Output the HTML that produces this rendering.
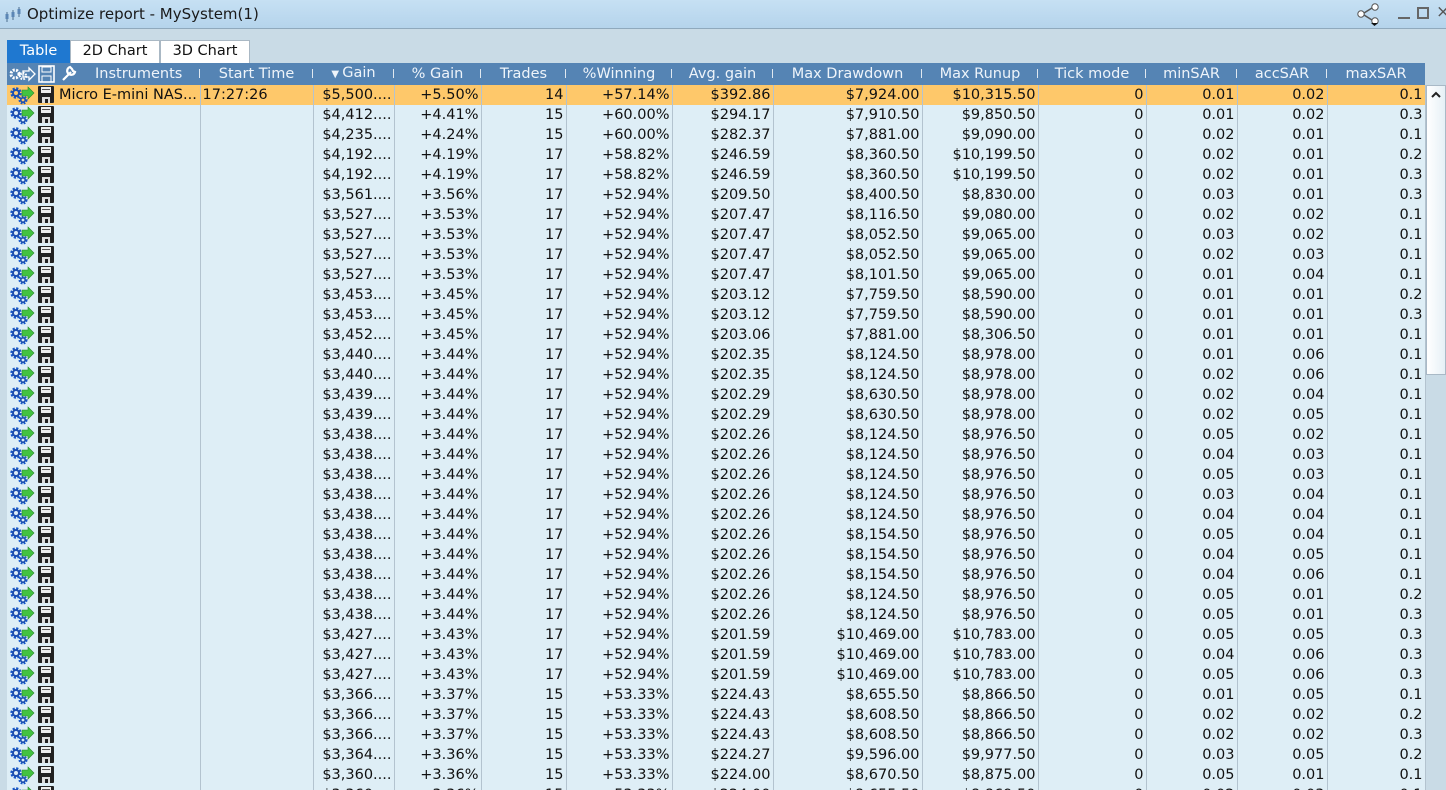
<!DOCTYPE html>
<html><head><meta charset="utf-8">
<style>
*{margin:0;padding:0;box-sizing:border-box}
html,body{width:1446px;height:790px;overflow:hidden}
body{background:#c9dbe6;font-family:"DejaVu Sans","Liberation Sans",sans-serif;font-size:14.5px;color:#111;position:relative}
#title{position:absolute;left:0;top:0;width:1446px;height:29px;background:linear-gradient(#c6e0f3,#b5d4ec);border-bottom:1px solid #8fa9bd}
#title .t{position:absolute;left:27px;top:5px;font-size:15px;color:#1a1a1a}
#tabs{position:absolute;left:7px;top:40px;height:23px}
.tab{position:absolute;top:0;height:23px;border:1px solid #aab8c4;border-bottom:none;background:#fff;text-align:center;line-height:21px;font-size:14.5px}
#wrap{position:absolute;left:7px;top:63px;width:1419px;height:727px;overflow:hidden}
table{border-collapse:collapse;table-layout:fixed;width:1418px}
tr{height:20px}
td,th{height:20px;line-height:19px;padding:0 2px;white-space:nowrap;overflow:hidden;font-weight:normal}
th{background:#5584b4;color:#eef4fa;height:21px;line-height:21px;text-align:center;position:relative}
th.s:after{content:"";position:absolute;right:0;top:6px;height:9px;border-right:1px solid #e0e8f0}
td{background:#deeef6;border-right:1px solid #b3c3cf;text-align:right}
tr.h td{background:#fec86a}
td.i{padding:0;border-right:none;text-align:left}
svg{display:block}
#sb{position:absolute;left:1426px;top:84px;width:20px;height:706px;background:#c9dbe6}
#thumb{position:absolute;left:1426px;top:85px;width:20px;height:290px;background:linear-gradient(90deg,#fff,#e6f0f6);border:1px solid #a9b9c6}
</style></head><body>
<svg width="0" height="0" style="position:absolute">
<defs>
<g id="g">
<circle cx="7" cy="8" r="4.2" fill="none" stroke="#1456c8" stroke-width="3" stroke-dasharray="2 1.3"/>
<circle cx="7" cy="8" r="3" fill="none" stroke="#1e4fae" stroke-width="2"/>
<circle cx="14" cy="15" r="3.2" fill="none" stroke="#1456c8" stroke-width="2.6" stroke-dasharray="1.6 1.1"/>
<circle cx="14" cy="15" r="2.2" fill="none" stroke="#1e4fae" stroke-width="1.6"/>
<path d="M13 5h6v-3l6 6-6 6v-3h-6z" fill="#43c241" stroke="#2a8a2a" stroke-width=".6"/>
</g>
<g id="f">
<rect x="1" y="1" width="16" height="17" rx="1" fill="#222"/>
<rect x="4" y="2" width="10" height="6" fill="#eee"/>
<rect x="5" y="4" width="8" height="1" fill="#555"/>
<rect x="5" y="12" width="8" height="6" fill="#ddd"/>
<rect x="8" y="14" width="3" height="4" fill="#222"/>
</g>
</defs></svg>
<div id="title">
<svg style="position:absolute;left:4px;top:6px" width="20" height="18"><path d="M3 6v10M9 4v10M15 1v10" stroke="#4a6c8c" stroke-width="1"/><rect x="1.5" y="8" width="3" height="5" fill="#5b86b5"/><rect x="7.5" y="6" width="3" height="5" fill="#5b86b5"/><rect x="13.5" y="3" width="3" height="5" fill="#5b86b5"/></svg>
<span class="t">Optimize report - MySystem(1)</span>
<svg style="position:absolute;left:1356px;top:3px" width="30" height="24"><circle cx="19" cy="4" r="3.2" fill="#fff" stroke="#555"/><circle cx="5" cy="11" r="3.2" fill="#fff" stroke="#555"/><circle cx="19" cy="18" r="3.2" fill="#fff" stroke="#555"/><path d="M8 10l8-5M8 12l8 5" stroke="#555" stroke-width="1.5"/><path d="M15 20h7l-3.5 3z" fill="#111"/></svg>
<div style="position:absolute;left:1398px;top:17px;width:12px;height:2px;background:#666"></div>
<div style="position:absolute;left:1417px;top:7px;width:12px;height:12px;border:2px solid #666"></div>
<div style="position:absolute;left:1436px;top:2px;font-size:17px;color:#555">×</div>
</div>
<div id="tabs">
<div class="tab" style="left:0;width:63px;background:#1f78d0;color:#fff;border-color:#1f78d0">Table</div>
<div class="tab" style="left:63px;width:90px">2D Chart</div>
<div class="tab" style="left:153px;width:90px">3D Chart</div>
</div>
<div id="wrap">
<table>
<colgroup><col style="width:30px"><col style="width:20px"><col style="width:143px"><col style="width:113px"><col style="width:81px"><col style="width:87px"><col style="width:85px"><col style="width:106px"><col style="width:101px"><col style="width:149px"><col style="width:116px"><col style="width:108px"><col style="width:91px"><col style="width:90px"><col style="width:98px"></colgroup>
<tr style="height:21px"><th style="padding:0"><svg width="30" height="20"><g transform="translate(2,1)"><circle cx="6" cy="9" r="4" fill="none" stroke="#fff" stroke-width="3" stroke-dasharray="2 1.3"/><circle cx="14" cy="11" r="3" fill="none" stroke="#fff" stroke-width="2.4" stroke-dasharray="1.6 1.1"/><path d="M14 6h6v-3l6 6-6 6v-3h-6z" fill="none" stroke="#fff" stroke-width="1.3"/></g></svg></th><th style="padding:0"><svg width="20" height="20"><rect x="2" y="2" width="15" height="16" fill="none" stroke="#fff" stroke-width="1.6"/><rect x="5" y="3" width="9" height="5" fill="none" stroke="#fff"/><rect x="5" y="12" width="9" height="6" fill="none" stroke="#fff"/></svg></th><th class="s" style="text-align:left;padding-left:0"><svg width="20" height="20" style="position:absolute;left:2px;top:0"><path d="M4 17l8-8M11 4a4 4 0 1 0 5 5l-2-1-1-2z" stroke="#fff" stroke-width="2.2" fill="none"/></svg><span style="margin-left:38px">Instruments</span></th><th class="s">Start Time</th><th class="s"><span style="font-size:10px">▼ </span>Gain</th><th class="s">% Gain</th><th class="s">Trades</th><th class="s">%Winning</th><th class="s">Avg. gain</th><th class="s">Max Drawdown</th><th class="s">Max Runup</th><th class="s">Tick mode</th><th class="s">minSAR</th><th class="s">accSAR</th><th>maxSAR</th></tr>
<tr class="h"><td class="i"><svg width="30" height="20"><use href="#g" x="2" y="0"/></svg></td><td class="i"><svg width="20" height="20"><use href="#f"/></svg></td><td style="text-align:left">Micro E-mini NAS...</td><td style="text-align:left">17:27:26</td><td>$5,500....</td><td>+5.50%</td><td>14</td><td>+57.14%</td><td>$392.86</td><td>$7,924.00</td><td>$10,315.50</td><td>0</td><td>0.01</td><td>0.02</td><td>0.1</td></tr>
<tr><td class="i"><svg width="30" height="20"><use href="#g" x="2" y="0"/></svg></td><td class="i"><svg width="20" height="20"><use href="#f"/></svg></td><td></td><td></td><td>$4,412....</td><td>+4.41%</td><td>15</td><td>+60.00%</td><td>$294.17</td><td>$7,910.50</td><td>$9,850.50</td><td>0</td><td>0.01</td><td>0.02</td><td>0.3</td></tr>
<tr><td class="i"><svg width="30" height="20"><use href="#g" x="2" y="0"/></svg></td><td class="i"><svg width="20" height="20"><use href="#f"/></svg></td><td></td><td></td><td>$4,235....</td><td>+4.24%</td><td>15</td><td>+60.00%</td><td>$282.37</td><td>$7,881.00</td><td>$9,090.00</td><td>0</td><td>0.02</td><td>0.01</td><td>0.1</td></tr>
<tr><td class="i"><svg width="30" height="20"><use href="#g" x="2" y="0"/></svg></td><td class="i"><svg width="20" height="20"><use href="#f"/></svg></td><td></td><td></td><td>$4,192....</td><td>+4.19%</td><td>17</td><td>+58.82%</td><td>$246.59</td><td>$8,360.50</td><td>$10,199.50</td><td>0</td><td>0.02</td><td>0.01</td><td>0.2</td></tr>
<tr><td class="i"><svg width="30" height="20"><use href="#g" x="2" y="0"/></svg></td><td class="i"><svg width="20" height="20"><use href="#f"/></svg></td><td></td><td></td><td>$4,192....</td><td>+4.19%</td><td>17</td><td>+58.82%</td><td>$246.59</td><td>$8,360.50</td><td>$10,199.50</td><td>0</td><td>0.02</td><td>0.01</td><td>0.3</td></tr>
<tr><td class="i"><svg width="30" height="20"><use href="#g" x="2" y="0"/></svg></td><td class="i"><svg width="20" height="20"><use href="#f"/></svg></td><td></td><td></td><td>$3,561....</td><td>+3.56%</td><td>17</td><td>+52.94%</td><td>$209.50</td><td>$8,400.50</td><td>$8,830.00</td><td>0</td><td>0.03</td><td>0.01</td><td>0.3</td></tr>
<tr><td class="i"><svg width="30" height="20"><use href="#g" x="2" y="0"/></svg></td><td class="i"><svg width="20" height="20"><use href="#f"/></svg></td><td></td><td></td><td>$3,527....</td><td>+3.53%</td><td>17</td><td>+52.94%</td><td>$207.47</td><td>$8,116.50</td><td>$9,080.00</td><td>0</td><td>0.02</td><td>0.02</td><td>0.1</td></tr>
<tr><td class="i"><svg width="30" height="20"><use href="#g" x="2" y="0"/></svg></td><td class="i"><svg width="20" height="20"><use href="#f"/></svg></td><td></td><td></td><td>$3,527....</td><td>+3.53%</td><td>17</td><td>+52.94%</td><td>$207.47</td><td>$8,052.50</td><td>$9,065.00</td><td>0</td><td>0.03</td><td>0.02</td><td>0.1</td></tr>
<tr><td class="i"><svg width="30" height="20"><use href="#g" x="2" y="0"/></svg></td><td class="i"><svg width="20" height="20"><use href="#f"/></svg></td><td></td><td></td><td>$3,527....</td><td>+3.53%</td><td>17</td><td>+52.94%</td><td>$207.47</td><td>$8,052.50</td><td>$9,065.00</td><td>0</td><td>0.02</td><td>0.03</td><td>0.1</td></tr>
<tr><td class="i"><svg width="30" height="20"><use href="#g" x="2" y="0"/></svg></td><td class="i"><svg width="20" height="20"><use href="#f"/></svg></td><td></td><td></td><td>$3,527....</td><td>+3.53%</td><td>17</td><td>+52.94%</td><td>$207.47</td><td>$8,101.50</td><td>$9,065.00</td><td>0</td><td>0.01</td><td>0.04</td><td>0.1</td></tr>
<tr><td class="i"><svg width="30" height="20"><use href="#g" x="2" y="0"/></svg></td><td class="i"><svg width="20" height="20"><use href="#f"/></svg></td><td></td><td></td><td>$3,453....</td><td>+3.45%</td><td>17</td><td>+52.94%</td><td>$203.12</td><td>$7,759.50</td><td>$8,590.00</td><td>0</td><td>0.01</td><td>0.01</td><td>0.2</td></tr>
<tr><td class="i"><svg width="30" height="20"><use href="#g" x="2" y="0"/></svg></td><td class="i"><svg width="20" height="20"><use href="#f"/></svg></td><td></td><td></td><td>$3,453....</td><td>+3.45%</td><td>17</td><td>+52.94%</td><td>$203.12</td><td>$7,759.50</td><td>$8,590.00</td><td>0</td><td>0.01</td><td>0.01</td><td>0.3</td></tr>
<tr><td class="i"><svg width="30" height="20"><use href="#g" x="2" y="0"/></svg></td><td class="i"><svg width="20" height="20"><use href="#f"/></svg></td><td></td><td></td><td>$3,452....</td><td>+3.45%</td><td>17</td><td>+52.94%</td><td>$203.06</td><td>$7,881.00</td><td>$8,306.50</td><td>0</td><td>0.01</td><td>0.01</td><td>0.1</td></tr>
<tr><td class="i"><svg width="30" height="20"><use href="#g" x="2" y="0"/></svg></td><td class="i"><svg width="20" height="20"><use href="#f"/></svg></td><td></td><td></td><td>$3,440....</td><td>+3.44%</td><td>17</td><td>+52.94%</td><td>$202.35</td><td>$8,124.50</td><td>$8,978.00</td><td>0</td><td>0.01</td><td>0.06</td><td>0.1</td></tr>
<tr><td class="i"><svg width="30" height="20"><use href="#g" x="2" y="0"/></svg></td><td class="i"><svg width="20" height="20"><use href="#f"/></svg></td><td></td><td></td><td>$3,440....</td><td>+3.44%</td><td>17</td><td>+52.94%</td><td>$202.35</td><td>$8,124.50</td><td>$8,978.00</td><td>0</td><td>0.02</td><td>0.06</td><td>0.1</td></tr>
<tr><td class="i"><svg width="30" height="20"><use href="#g" x="2" y="0"/></svg></td><td class="i"><svg width="20" height="20"><use href="#f"/></svg></td><td></td><td></td><td>$3,439....</td><td>+3.44%</td><td>17</td><td>+52.94%</td><td>$202.29</td><td>$8,630.50</td><td>$8,978.00</td><td>0</td><td>0.02</td><td>0.04</td><td>0.1</td></tr>
<tr><td class="i"><svg width="30" height="20"><use href="#g" x="2" y="0"/></svg></td><td class="i"><svg width="20" height="20"><use href="#f"/></svg></td><td></td><td></td><td>$3,439....</td><td>+3.44%</td><td>17</td><td>+52.94%</td><td>$202.29</td><td>$8,630.50</td><td>$8,978.00</td><td>0</td><td>0.02</td><td>0.05</td><td>0.1</td></tr>
<tr><td class="i"><svg width="30" height="20"><use href="#g" x="2" y="0"/></svg></td><td class="i"><svg width="20" height="20"><use href="#f"/></svg></td><td></td><td></td><td>$3,438....</td><td>+3.44%</td><td>17</td><td>+52.94%</td><td>$202.26</td><td>$8,124.50</td><td>$8,976.50</td><td>0</td><td>0.05</td><td>0.02</td><td>0.1</td></tr>
<tr><td class="i"><svg width="30" height="20"><use href="#g" x="2" y="0"/></svg></td><td class="i"><svg width="20" height="20"><use href="#f"/></svg></td><td></td><td></td><td>$3,438....</td><td>+3.44%</td><td>17</td><td>+52.94%</td><td>$202.26</td><td>$8,124.50</td><td>$8,976.50</td><td>0</td><td>0.04</td><td>0.03</td><td>0.1</td></tr>
<tr><td class="i"><svg width="30" height="20"><use href="#g" x="2" y="0"/></svg></td><td class="i"><svg width="20" height="20"><use href="#f"/></svg></td><td></td><td></td><td>$3,438....</td><td>+3.44%</td><td>17</td><td>+52.94%</td><td>$202.26</td><td>$8,124.50</td><td>$8,976.50</td><td>0</td><td>0.05</td><td>0.03</td><td>0.1</td></tr>
<tr><td class="i"><svg width="30" height="20"><use href="#g" x="2" y="0"/></svg></td><td class="i"><svg width="20" height="20"><use href="#f"/></svg></td><td></td><td></td><td>$3,438....</td><td>+3.44%</td><td>17</td><td>+52.94%</td><td>$202.26</td><td>$8,124.50</td><td>$8,976.50</td><td>0</td><td>0.03</td><td>0.04</td><td>0.1</td></tr>
<tr><td class="i"><svg width="30" height="20"><use href="#g" x="2" y="0"/></svg></td><td class="i"><svg width="20" height="20"><use href="#f"/></svg></td><td></td><td></td><td>$3,438....</td><td>+3.44%</td><td>17</td><td>+52.94%</td><td>$202.26</td><td>$8,124.50</td><td>$8,976.50</td><td>0</td><td>0.04</td><td>0.04</td><td>0.1</td></tr>
<tr><td class="i"><svg width="30" height="20"><use href="#g" x="2" y="0"/></svg></td><td class="i"><svg width="20" height="20"><use href="#f"/></svg></td><td></td><td></td><td>$3,438....</td><td>+3.44%</td><td>17</td><td>+52.94%</td><td>$202.26</td><td>$8,154.50</td><td>$8,976.50</td><td>0</td><td>0.05</td><td>0.04</td><td>0.1</td></tr>
<tr><td class="i"><svg width="30" height="20"><use href="#g" x="2" y="0"/></svg></td><td class="i"><svg width="20" height="20"><use href="#f"/></svg></td><td></td><td></td><td>$3,438....</td><td>+3.44%</td><td>17</td><td>+52.94%</td><td>$202.26</td><td>$8,154.50</td><td>$8,976.50</td><td>0</td><td>0.04</td><td>0.05</td><td>0.1</td></tr>
<tr><td class="i"><svg width="30" height="20"><use href="#g" x="2" y="0"/></svg></td><td class="i"><svg width="20" height="20"><use href="#f"/></svg></td><td></td><td></td><td>$3,438....</td><td>+3.44%</td><td>17</td><td>+52.94%</td><td>$202.26</td><td>$8,154.50</td><td>$8,976.50</td><td>0</td><td>0.04</td><td>0.06</td><td>0.1</td></tr>
<tr><td class="i"><svg width="30" height="20"><use href="#g" x="2" y="0"/></svg></td><td class="i"><svg width="20" height="20"><use href="#f"/></svg></td><td></td><td></td><td>$3,438....</td><td>+3.44%</td><td>17</td><td>+52.94%</td><td>$202.26</td><td>$8,124.50</td><td>$8,976.50</td><td>0</td><td>0.05</td><td>0.01</td><td>0.2</td></tr>
<tr><td class="i"><svg width="30" height="20"><use href="#g" x="2" y="0"/></svg></td><td class="i"><svg width="20" height="20"><use href="#f"/></svg></td><td></td><td></td><td>$3,438....</td><td>+3.44%</td><td>17</td><td>+52.94%</td><td>$202.26</td><td>$8,124.50</td><td>$8,976.50</td><td>0</td><td>0.05</td><td>0.01</td><td>0.3</td></tr>
<tr><td class="i"><svg width="30" height="20"><use href="#g" x="2" y="0"/></svg></td><td class="i"><svg width="20" height="20"><use href="#f"/></svg></td><td></td><td></td><td>$3,427....</td><td>+3.43%</td><td>17</td><td>+52.94%</td><td>$201.59</td><td>$10,469.00</td><td>$10,783.00</td><td>0</td><td>0.05</td><td>0.05</td><td>0.3</td></tr>
<tr><td class="i"><svg width="30" height="20"><use href="#g" x="2" y="0"/></svg></td><td class="i"><svg width="20" height="20"><use href="#f"/></svg></td><td></td><td></td><td>$3,427....</td><td>+3.43%</td><td>17</td><td>+52.94%</td><td>$201.59</td><td>$10,469.00</td><td>$10,783.00</td><td>0</td><td>0.04</td><td>0.06</td><td>0.3</td></tr>
<tr><td class="i"><svg width="30" height="20"><use href="#g" x="2" y="0"/></svg></td><td class="i"><svg width="20" height="20"><use href="#f"/></svg></td><td></td><td></td><td>$3,427....</td><td>+3.43%</td><td>17</td><td>+52.94%</td><td>$201.59</td><td>$10,469.00</td><td>$10,783.00</td><td>0</td><td>0.05</td><td>0.06</td><td>0.3</td></tr>
<tr><td class="i"><svg width="30" height="20"><use href="#g" x="2" y="0"/></svg></td><td class="i"><svg width="20" height="20"><use href="#f"/></svg></td><td></td><td></td><td>$3,366....</td><td>+3.37%</td><td>15</td><td>+53.33%</td><td>$224.43</td><td>$8,655.50</td><td>$8,866.50</td><td>0</td><td>0.01</td><td>0.05</td><td>0.1</td></tr>
<tr><td class="i"><svg width="30" height="20"><use href="#g" x="2" y="0"/></svg></td><td class="i"><svg width="20" height="20"><use href="#f"/></svg></td><td></td><td></td><td>$3,366....</td><td>+3.37%</td><td>15</td><td>+53.33%</td><td>$224.43</td><td>$8,608.50</td><td>$8,866.50</td><td>0</td><td>0.02</td><td>0.02</td><td>0.2</td></tr>
<tr><td class="i"><svg width="30" height="20"><use href="#g" x="2" y="0"/></svg></td><td class="i"><svg width="20" height="20"><use href="#f"/></svg></td><td></td><td></td><td>$3,366....</td><td>+3.37%</td><td>15</td><td>+53.33%</td><td>$224.43</td><td>$8,608.50</td><td>$8,866.50</td><td>0</td><td>0.02</td><td>0.02</td><td>0.3</td></tr>
<tr><td class="i"><svg width="30" height="20"><use href="#g" x="2" y="0"/></svg></td><td class="i"><svg width="20" height="20"><use href="#f"/></svg></td><td></td><td></td><td>$3,364....</td><td>+3.36%</td><td>15</td><td>+53.33%</td><td>$224.27</td><td>$9,596.00</td><td>$9,977.50</td><td>0</td><td>0.03</td><td>0.05</td><td>0.2</td></tr>
<tr><td class="i"><svg width="30" height="20"><use href="#g" x="2" y="0"/></svg></td><td class="i"><svg width="20" height="20"><use href="#f"/></svg></td><td></td><td></td><td>$3,360....</td><td>+3.36%</td><td>15</td><td>+53.33%</td><td>$224.00</td><td>$8,670.50</td><td>$8,875.00</td><td>0</td><td>0.05</td><td>0.01</td><td>0.1</td></tr>
<tr><td class="i"><svg width="30" height="20"><use href="#g" x="2" y="0"/></svg></td><td class="i"><svg width="20" height="20"><use href="#f"/></svg></td><td></td><td></td><td>$3,360....</td><td>+3.36%</td><td>15</td><td>+53.33%</td><td>$224.00</td><td>$8,655.50</td><td>$8,869.50</td><td>0</td><td>0.02</td><td>0.03</td><td>0.1</td></tr>
</table>
</div>
<div id="sb"></div>
<div id="thumb"><svg width="18" height="18" style="position:absolute;left:0;top:0"><path d="M5 11l4-4 4 4" stroke="#222" stroke-width="2" fill="none"/></svg></div>
</body></html>
